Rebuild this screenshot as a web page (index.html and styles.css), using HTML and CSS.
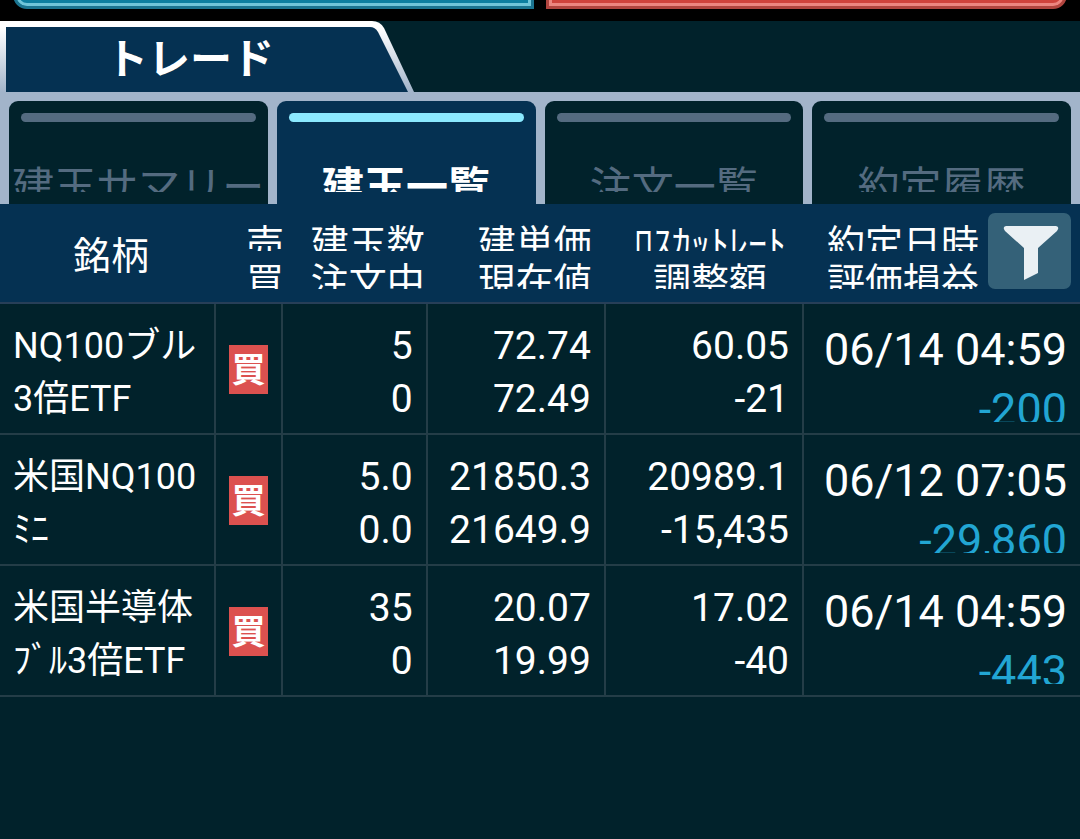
FILE: index.html
```html
<!DOCTYPE html>
<html lang="ja">
<head>
<meta charset="utf-8">
<meta name="viewport" content="width=device-width">
<title>トレード</title>
<link rel="stylesheet" href="styles.css">
</head>
<body>
<div class="orders">
  <button class="order order-sell" type="button" aria-label="売"></button>
  <button class="order order-buy" type="button" aria-label="買"></button>
</div>
<header class="title">
  <svg class="title-shape" width="414" height="71" viewBox="0 0 414 71" aria-hidden="true">
    <defs>
      <linearGradient id="edge" x1="0" y1="0" x2="0" y2="1">
        <stop offset="0.1" stop-color="#ffffff"/>
        <stop offset="1" stop-color="#a2b4ca"/>
      </linearGradient>
    </defs>
    <path fill="url(#edge)" d="M0 0H372Q380 0 384 7L414 71H0Z"/>
    <path fill="#053152" d="M6 6H370Q375 6 378 11L408 71H6Z"/>
  </svg>
  <h1 class="title-text">トレード</h1>
</header>
<nav class="tabs">
  <button class="tab" type="button"><span class="tab-label">建玉サマリー</span></button>
  <button class="tab tab-active" type="button"><span class="tab-label">建玉一覧</span></button>
  <button class="tab" type="button"><span class="tab-label">注文一覧</span></button>
  <button class="tab" type="button"><span class="tab-label">約定履歴</span></button>
</nav>
<table class="positions">
  <colgroup>
    <col class="col-name"><col class="col-side"><col class="col-qty"><col class="col-price"><col class="col-cut"><col>
  </colgroup>
  <thead>
    <tr>
      <th class="head-name">銘柄</th>
      <th class="head-side"><span class="clip">売</span><span class="clip">買</span></th>
      <th class="head-qty"><span class="clip">建玉数</span><span class="clip">注文中</span></th>
      <th class="head-price"><span class="clip">建単価</span><span class="clip">現在値</span></th>
      <th class="head-cut"><span class="clip">ﾛｽｶｯﾄﾚｰﾄ</span><span class="clip">調整額</span></th>
      <th class="head-date">
        <div class="head-tools">
          <div><span class="clip">約定日時</span><span class="clip">評価損益</span></div>
          <button class="filter" type="button" aria-label="絞り込み">
            <svg width="83" height="76" viewBox="0 0 83 76" aria-hidden="true">
              <path fill="#eaf0f4" d="M18 13H68Q72 14 69 18L50 35V60L36 67V35L17 18Q14 14 18 13Z"/>
            </svg>
          </button>
        </div>
      </th>
    </tr>
  </thead>
  <tbody>
    <tr>
      <td class="name">NQ100ブル<br>3倍ETF</td>
      <td class="side"><span class="badge">買</span></td>
      <td class="num">5<br>0</td>
      <td class="num">72.74<br>72.49</td>
      <td class="num">60.05<br>-21</td>
      <td class="result"><span class="date">06/14 04:59</span><span class="loss">-200</span></td>
    </tr>
    <tr>
      <td class="name">米国NQ100<br>ﾐﾆ</td>
      <td class="side"><span class="badge">買</span></td>
      <td class="num">5.0<br>0.0</td>
      <td class="num">21850.3<br>21649.9</td>
      <td class="num">20989.1<br>-15,435</td>
      <td class="result"><span class="date">06/12 07:05</span><span class="loss">-29,860</span></td>
    </tr>
    <tr>
      <td class="name">米国半導体<br>ﾌﾞﾙ3倍ETF</td>
      <td class="side"><span class="badge">買</span></td>
      <td class="num">35<br>0</td>
      <td class="num">20.07<br>19.99</td>
      <td class="num">17.02<br>-40</td>
      <td class="result"><span class="date">06/14 04:59</span><span class="loss">-443</span></td>
    </tr>
  </tbody>
</table>
</body>
</html>
```

FILE: styles.css
```css
* {
  box-sizing: border-box;
}

body {
  margin: 0;
  background: #01222b;
  color: #fff;
  font-family: Roboto, "Noto Sans CJK JP", sans-serif;
}

button {
  margin: 0;
  padding: 0;
  border: 0;
  color: inherit;
  font: inherit;
}

/* Labels set only in Japanese */
.title-text,
.tab,
th,
.badge {
  font-family: "Noto Sans CJK JP", Roboto, sans-serif;
}

/* Lower edge of the order buttons */
.orders {
  display: flex;
  align-items: flex-end;
  gap: 12px;
  height: 21px;
  padding: 0 13px 12px;
  background: #000;
  overflow: hidden;
}

.order {
  flex: 1;
  flex-shrink: 0;
  height: 60px;
}

.order-sell {
  border: 3px solid #1b7490;
  border-radius: 14px 0 0 14px;
  background: #0d7fa0;
  box-shadow: inset 0 0 0 3px #70c5d9;
}

.order-buy {
  border: 3px solid #b0453f;
  border-radius: 0 14px 14px 0;
  background: #cf433c;
  box-shadow: inset 0 0 0 3px #ec8680;
}

/* Panel title */
.title {
  position: relative;
  height: 71px;
}

.title-shape {
  position: absolute;
  top: 0;
  left: 0;
}

.title-text {
  position: relative;
  width: 380px;
  margin: 0;
  padding-top: 14px;
  font-size: 42px;
  font-weight: 700;
  line-height: 42px;
  text-align: center;
}

/* Tabs */
.tabs {
  display: grid;
  grid-template-columns: repeat(4, 1fr);
  gap: 9px;
  padding: 9px 9px 0;
  background: #a2b4ca;
}

.tab {
  display: flex;
  flex-direction: column;
  gap: 42px;
  min-width: 0;
  padding: 12px 0;
  border-radius: 9px 9px 0 0;
  background: #01222b;
  color: #546b80;
  font-size: 42px;
  line-height: 40px;
}

.tab::before {
  content: "";
  align-self: stretch;
  height: 9px;
  margin: 0 12px;
  border-radius: 5px;
  background: #546b80;
}

.tab-label {
  align-self: center;
  height: 28px;
  overflow: hidden;
  white-space: nowrap;
}

.tab-active {
  background: #053152;
  color: #fff;
  font-weight: 700;
}

.tab-active::before {
  background: #8be9ff;
}

/* Positions table */
.positions {
  width: 100%;
  border-collapse: separate;
  border-spacing: 0;
  table-layout: fixed;
}

.col-name { width: 20%; }
.col-side { width: 6.2%; }
.col-qty { width: 13.4%; }
.col-price { width: 16.5%; }
.col-cut { width: 18.35%; }

th {
  height: 100px;
  padding: 0 0 13px;
  border-bottom: 2px solid #273f58;
  background: #053152;
  font-size: 38px;
  font-weight: 400;
  line-height: 36px;
  text-align: center;
  vertical-align: bottom;
  white-space: nowrap;
}

.clip {
  display: block;
  height: 28px;
  overflow: hidden;
}

.clip + .clip {
  margin-top: 10px;
}

.head-name {
  padding: 0 0 0 6px;
  vertical-align: middle;
}

.head-side { padding-left: 30px; }
.head-qty { padding-right: 3px; text-align: right; }
.head-price { padding-right: 14px; text-align: right; }
.head-cut { padding-left: 10px; }
.head-date { padding-right: 9px; }

.head-tools {
  display: flex;
  align-items: flex-end;
  justify-content: flex-end;
  gap: 9px;
}

.filter {
  width: 83px;
  height: 76px;
  border-radius: 7px;
  background: #346178;
}

.filter svg {
  display: block;
}

td {
  height: 131px;
  padding: 16px 13px 7px;
  border-right: 2px solid #243d47;
  border-bottom: 2px solid #243d47;
  line-height: 53px;
  white-space: nowrap;
}

td:last-child {
  border-right: 0;
}

.name {
  font-size: 36px;
}

.num {
  font-size: 39px;
  text-align: right;
}

.side {
  padding: 2px 0 0;
}

.badge {
  display: block;
  width: 39px;
  height: 49px;
  margin: 0 auto;
  background: #dc514f;
  font-size: 34px;
  font-weight: 700;
  line-height: 45px;
  text-align: center;
}

.result {
  padding: 23px 13px 11px;
  font-size: 45px;
  line-height: 45px;
  text-align: right;
}

.date {
  display: block;
}

.loss {
  display: block;
  height: 35px;
  margin-top: 15px;
  overflow: hidden;
  color: #22a6d3;
}
```
